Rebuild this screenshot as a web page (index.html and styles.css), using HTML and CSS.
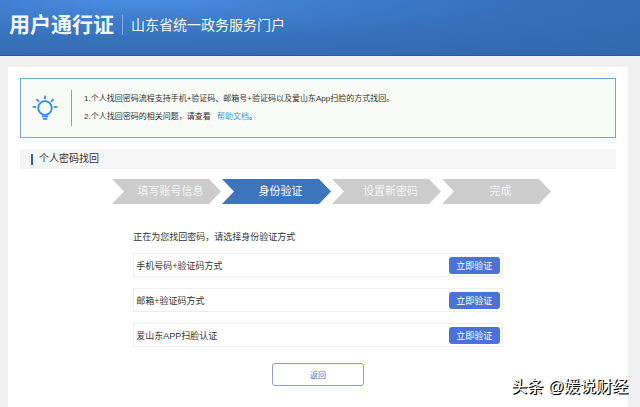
FILE: index.html
```html
<!DOCTYPE html>
<html lang="zh-CN">
<head>
  <meta charset="UTF-8">
  <title>用户通行证</title>
  <link rel="stylesheet" href="styles.css">
</head>
<body>

  <header class="header">
    <h1>用户通行证</h1>
    <span class="site-name">山东省统一政务服务门户</span>
  </header>

  <main class="panel">
    <div class="notice">
      <svg class="bulb" viewBox="0 0 26 26" fill="none" stroke="#2b8ef0" stroke-width="1.8" stroke-linecap="round">
        <circle cx="13" cy="13" r="6.8"/>
        <path d="M13 1.5v2M5 4.6l1.4 1.6M21 4.6l-1.4 1.6M1.5 11.8l2 .3M24.5 11.8l-2 .3"/>
        <path d="M10.5 21.3h5M11.5 23.8h3"/>
      </svg>
      <div class="notice-text">
        <p>1.个人找回密码流程支持手机+验证码、邮箱号+验证码以及爱山东App扫脸的方式找回。</p>
        <p>2.个人找回密码的相关问题，请查看 <a href="#">帮助文档</a>。</p>
      </div>
    </div>

    <h2 class="section-title">个人密码找回</h2>

    <ol class="steps">
      <li>填写账号信息</li>
      <li class="active">身份验证</li>
      <li>设置新密码</li>
      <li>完成</li>
    </ol>

    <div class="verify">
      <p class="tip">正在为您找回密码，请选择身份验证方式</p>
      <ul class="methods">
        <li><span id="phone">手机号码+验证码方式</span><button type="button" aria-describedby="phone">立即验证</button></li>
        <li><span id="email">邮箱+验证码方式</span><button type="button" aria-describedby="email">立即验证</button></li>
        <li><span id="app">爱山东APP扫脸认证</span><button type="button" aria-describedby="app">立即验证</button></li>
      </ul>
      <button type="button" class="back-btn">返回</button>
    </div>
  </main>

  <div class="watermark">头条 @媛说财经</div>

</body>
</html>
```
FILE: styles.css
```css
* {
  box-sizing: border-box;
}

body {
  display: flex;
  flex-direction: column;
  position: relative;
  min-height: 100vh;
  margin: 0;
  background-color: #f0f0f0;
  color: #333;
  font-family: "Liberation Sans", "Noto Sans CJK SC", sans-serif;
  font-size: 9px;
}

h1, h2, p, ol, ul {
  margin: 0;
  padding: 0;
}

ol, ul {
  list-style: none;
}

button {
  font-family: inherit;
  cursor: pointer;
}

.header {
  display: flex;
  align-items: center;
  height: 56px;
  padding: 0 9px 5px;
  border-bottom: 1px solid #2a569c;
  background: radial-gradient(ellipse at 22% 0%, #4a8de2 0%, #3f7dcd 25%, #3570b8 55%, #3268ad 100%);
  color: #f0f7ff;
}

.header h1 {
  font-size: 21px;
  line-height: 24px;
}

.site-name {
  margin-left: 8px;
  padding-left: 8px;
  border-left: 1px solid #7fadea;
  font-size: 14px;
  line-height: 20px;
}

.panel {
  flex: 1;
  margin: 11px 12px 0 8px;
  padding: 11px 12px 20px;
  background-color: #fff;
}

.notice {
  display: flex;
  align-items: center;
  height: 60px;
  padding: 0 11px;
  border: 1px solid #6facca;
  background-color: #f7faf5;
}

.bulb {
  width: 26px;
  height: 26px;
}

.notice-text {
  margin-left: 13px;
  padding-left: 12px;
  border-left: 1px solid #6facca;
  font-size: 8px;
  line-height: 18px;
}

.notice a {
  margin-left: 4px;
  color: #3a9bd5;
  text-decoration: none;
}

.section-title {
  display: flex;
  align-items: center;
  height: 20px;
  margin-top: 11px;
  padding-left: 11px;
  background-color: #f5f5f5;
  font-size: 10px;
  font-weight: normal;
  line-height: 18px;
}

.section-title::before {
  content: "";
  width: 2px;
  height: 11px;
  margin-right: 6px;
  background-color: #2b5fae;
}

.steps {
  display: flex;
  justify-content: center;
  gap: 1px;
  margin-top: 10px;
  padding-left: 27px;
}

.steps li {
  width: 109px;
  padding-left: 8px;
  background-color: #ccc;
  clip-path: polygon(0 0, 97px 0, 100% 50%, 97px 100%, 0 100%, 12px 50%);
  color: #f5f5f5;
  font-size: 11px;
  line-height: 25px;
  text-align: center;
}

.steps .active {
  background-color: #3d75bd;
  color: #fff;
}

.verify {
  width: 62%;
  margin: 26px auto 0;
}

.tip {
  line-height: 14px;
}

.methods li {
  display: flex;
  justify-content: space-between;
  align-items: center;
  height: 24px;
  margin-top: 11px;
  padding: 0 2px;
  border: 1px solid #eee;
}

.tip + .methods li:first-child {
  margin-top: 9px;
}

.methods button {
  width: 51px;
  height: 17px;
  padding: 0;
  border: none;
  border-radius: 3px;
  background-color: #4a73d3;
  color: #fff;
  font-size: 9px;
}

.back-btn {
  display: block;
  width: 92px;
  height: 23px;
  margin: 16px auto 0;
  padding: 0;
  border: 1px solid #8c9fd4;
  border-radius: 3px;
  background-color: #fff;
  color: #4a73d3;
  font-size: 8px;
}

.watermark {
  position: absolute;
  right: 12px;
  bottom: 8px;
  color: #fff;
  font-size: 16px;
  line-height: 24px;
  text-shadow: 1px 1px 1px #000, 1px 1px 0 #222;
}
```
